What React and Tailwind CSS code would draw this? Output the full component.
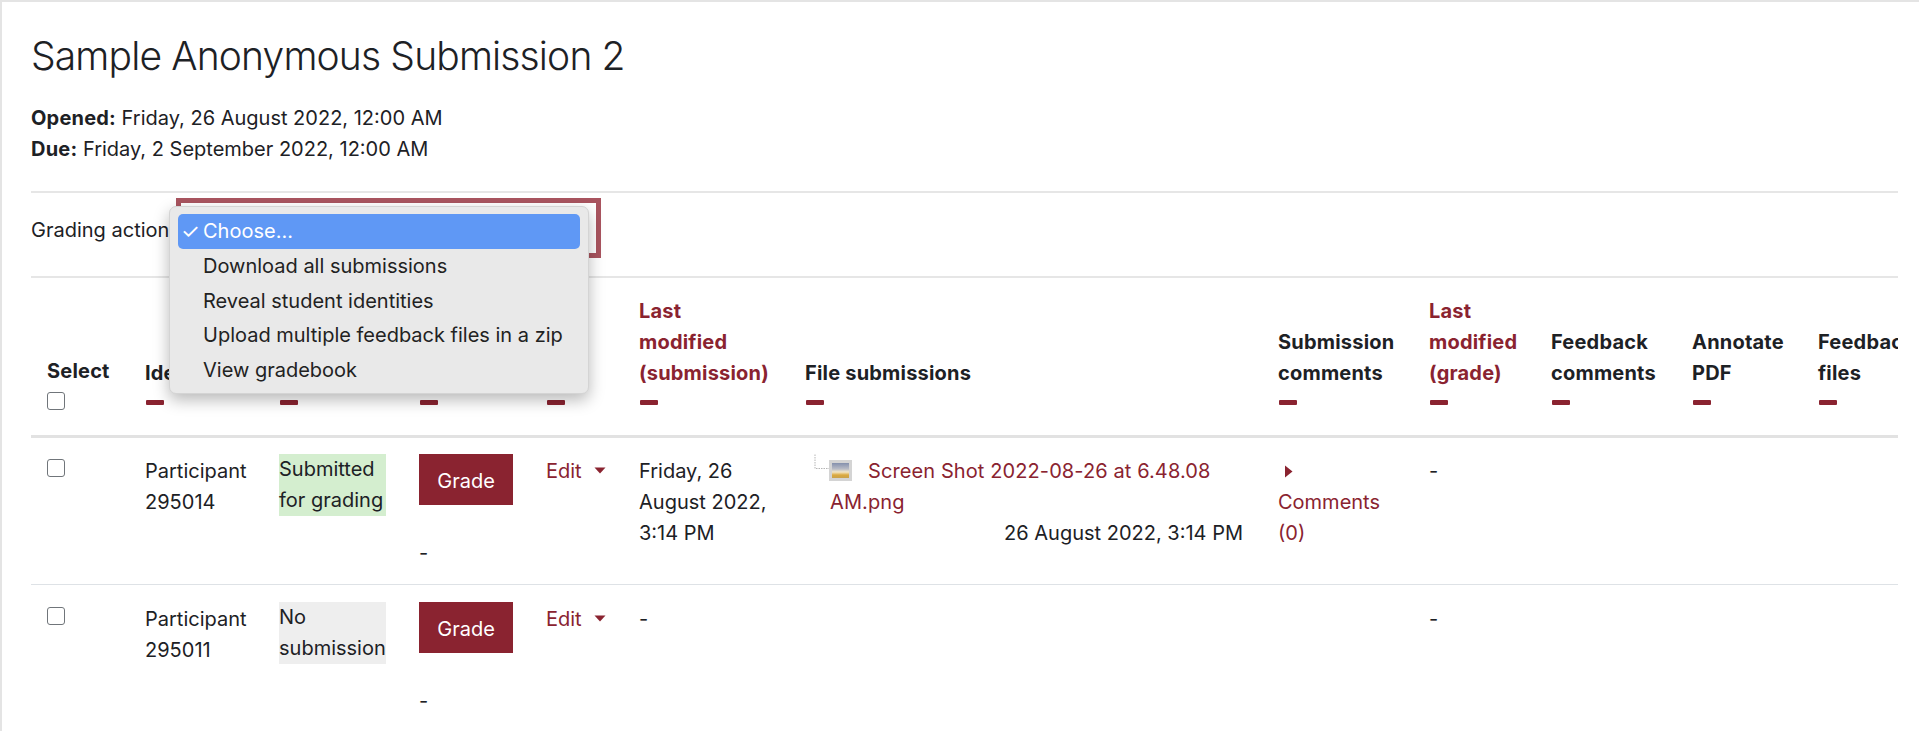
import { Fragment } from 'react'

const maroon = 'text-[#8a2330]'

// column widths, measured from the left edge of each column
const columns = [98, 134, 140, 127, 93, 166, 473, 151, 122, 141, 126, 200]

function SortDash() {
  return <div className="mt-[11px] h-[5px] w-[18px] rounded-[1px] bg-[#8a2330] ml-[1px]" />
}

function Head({ lines, red, dash = true }) {
  return (
    <th className={`align-bottom pl-4 pr-0 pt-[18px] pb-[30px] text-left font-bold tracking-[0.2px] leading-[31px] whitespace-nowrap ${red ? maroon : 'text-[#1d2125]'}`}>
      {lines.map((l, i) => (
        <div key={i}>{l}</div>
      ))}
      {dash && <SortDash />}
    </th>
  )
}

function Check({ className = '' }) {
  return (
    <input
      type="checkbox"
      readOnly
      className={`block appearance-none h-[18px] w-[18px] rounded-[3px] border border-[#70757a] bg-white ${className}`}
    />
  )
}

function CaretDown() {
  return (
    <svg width="12" height="7" viewBox="0 0 12 7" className="inline-block ml-[12px] mb-[5px]">
      <path d="M0.5 0.5 L11.5 0.5 L6 6.5 Z" fill="#8a2330" />
    </svg>
  )
}

function FileIcon() {
  return (
    <svg width="39" height="27" viewBox="0 0 39 27" className="absolute left-[9px] top-[-2px]">
      <defs>
        <linearGradient id="thumb" x1="0" y1="0" x2="0" y2="1">
          <stop offset="0" stopColor="#8490ad" />
          <stop offset="0.4" stopColor="#b9bcc6" />
          <stop offset="0.6" stopColor="#f3e6c6" />
          <stop offset="0.8" stopColor="#dba93f" />
          <stop offset="1" stopColor="#c9a24c" />
        </linearGradient>
      </defs>
      <path d="M1 0.5 V14.5 H15" fill="none" stroke="#b5b5b5" strokeWidth="1" strokeDasharray="1.5 1" />
      <rect x="15" y="6" width="23" height="21" fill="#d4d4d4" />
      <rect x="18" y="9" width="17" height="15" fill="url(#thumb)" />
    </svg>
  )
}

function Row({ id, status, statusBg, date, file, pad, textPad, checkTop }) {
  const box = `align-top pl-4 pb-4 ${pad}`
  const cell = `align-top pl-4 pb-4 ${textPad}`
  return (
    <tr className="border-b border-[#dee2e6]">
      <td className={cell}>
        <Check className={checkTop} />
      </td>
      <td className={cell}>
        Participant
        <br />
        {id}
      </td>
      <td className={box}>
        <div className={`w-[107px] whitespace-nowrap ${statusBg}`}>
          {status[0]}
          <br />
          {status[1]}
        </div>
      </td>
      <td className={`align-top pl-4 pb-[15px] ${pad}`}>
        <button className="block h-[51px] w-[94px] pt-[3px] bg-[#8a2330] text-white">Grade</button>
        <div className="mt-[33px]">-</div>
      </td>
      <td className={`${cell} ${maroon} whitespace-nowrap`}>
        Edit
        <CaretDown />
      </td>
      <td className={cell}>
        {date.map((l, i) => (
          <Fragment key={i}>
            {l}
            {i < date.length - 1 && <br />}
          </Fragment>
        ))}
      </td>
      <td className={cell}>
        {file && (
          <div className="relative pl-[25px] pr-[19px]">
            <FileIcon />
            <a className={`block ${maroon} whitespace-nowrap tracking-[0.1px]`}>
              <span className="ml-[38px]">Screen Shot 2022-08-26 at 6.48.08</span>
              <br />
              AM.png
            </a>
            <div className="text-right whitespace-nowrap">26 August 2022, 3:14 PM</div>
          </div>
        )}
      </td>
      <td className={cell}>
        {file && (
          <div className={maroon}>
            <svg width="9" height="13" viewBox="0 0 9 13" className="ml-[6px] mt-[9px] mb-[9px] block">
              <path d="M1 0.5 L8.5 6.5 L1 12.5 Z" fill="#8a2330" />
            </svg>
            Comments
            <br />
            (0)
          </div>
        )}
      </td>
      <td className={cell}>-</td>
      <td className={cell} />
      <td className={cell} />
      <td className={cell} />
    </tr>
  )
}

function SelectMenu() {
  const items = ['Download all submissions', 'Reveal student identities', 'Upload multiple feedback files in a zip', 'View gradebook']
  return (
    <div className="absolute left-[138px] top-[13px] w-[420px] h-[188px] rounded-[7px] border border-[#d4d4d4] bg-[#e9e9e9] px-2 pt-[7px] shadow-[0_6px_16px_rgba(0,0,0,0.28)] text-[#222]">
      <div className="flex items-center h-[35px] rounded-[5px] bg-[#5f98f5] text-white">
        <span className="w-[25px] pl-[3px] text-[21px]">✓</span>
        Choose...
      </div>
      {items.map((t) => (
        <div key={t} className="h-[34.5px] pl-[25px] leading-[34.5px] whitespace-nowrap">
          {t}
        </div>
      ))}
    </div>
  )
}

export default function App() {
  return (
    <div className="h-[731px] overflow-hidden bg-white border-t-2 border-l-2 border-[#e4e4e4] font-['Inter',sans-serif] text-[20px] leading-[31px] text-[#1d2125]">
      <div className="pl-[29px] pr-[21px]">
        <h1 className="pt-[26px] text-[39px] tracking-[-0.85px] leading-[56px] font-light text-[#1d2125]">Sample Anonymous Submission 2</h1>
        <div className="mt-[19px]">
          <div>
            <span className="font-bold tracking-[0.2px]">Opened:</span> Friday, 26 August 2022, 12:00 AM
          </div>
          <div>
            <span className="font-bold tracking-[0.2px]">Due:</span> Friday, 2 September 2022, 12:00 AM
          </div>
        </div>

        <div className="relative mt-[26px] flex h-[85px] items-center border-t-2 border-[#e6e6e6]">
          <span className="mt-[-9px]">Grading action</span>
          <div className="absolute left-[145px] top-[5px] h-[60px] w-[425px] border-[5px] border-[#a9545f]" />
          <SelectMenu />
        </div>

        <div className="overflow-hidden border-t-2 border-[#e6e6e6]">
          <table className="table-fixed border-collapse w-[1961px]">
            <colgroup>
              {columns.map((w, i) => (
                <col key={i} style={{ width: w }} />
              ))}
            </colgroup>
            <thead>
              <tr className="border-b-[3px] border-[#e2e2e2]">
                <th className="align-bottom pl-4 pb-[25px] text-left font-bold tracking-[0.2px] leading-[31px]">
                  <div>Select</div>
                  <Check className="mt-[5px]" />
                </th>
                <Head lines={['Identifier']} />
                <Head lines={['Status']} />
                <Head lines={['Grade']} />
                <Head lines={['Edit']} />
                <Head lines={['Last', 'modified', '(submission)']} red />
                <Head lines={['File submissions']} />
                <Head lines={['Submission', 'comments']} />
                <Head lines={['Last', 'modified', '(grade)']} red />
                <Head lines={['Feedback', 'comments']} />
                <Head lines={['Annotate', 'PDF']} />
                <Head lines={['Feedback', 'files']} />
              </tr>
            </thead>
            <tbody>
              <Row
                id="295014"
                status={['Submitted', 'for grading']}
                statusBg="bg-[#d4eecf]"
                date={['Friday, 26', 'August 2022,', '3:14 PM']}
                file
                pad="pt-[16px]"
                textPad="pt-[18px]"
                checkTop="mt-[3px]"
              />
              <Row
                id="295011"
                status={['No', 'submission']}
                statusBg="bg-[#eeeeee]"
                date={['-']}
                pad="pt-[17px]"
                textPad="pt-[19px]"
                checkTop="mt-[3px]"
              />
            </tbody>
          </table>
        </div>
      </div>
    </div>
  )
}
